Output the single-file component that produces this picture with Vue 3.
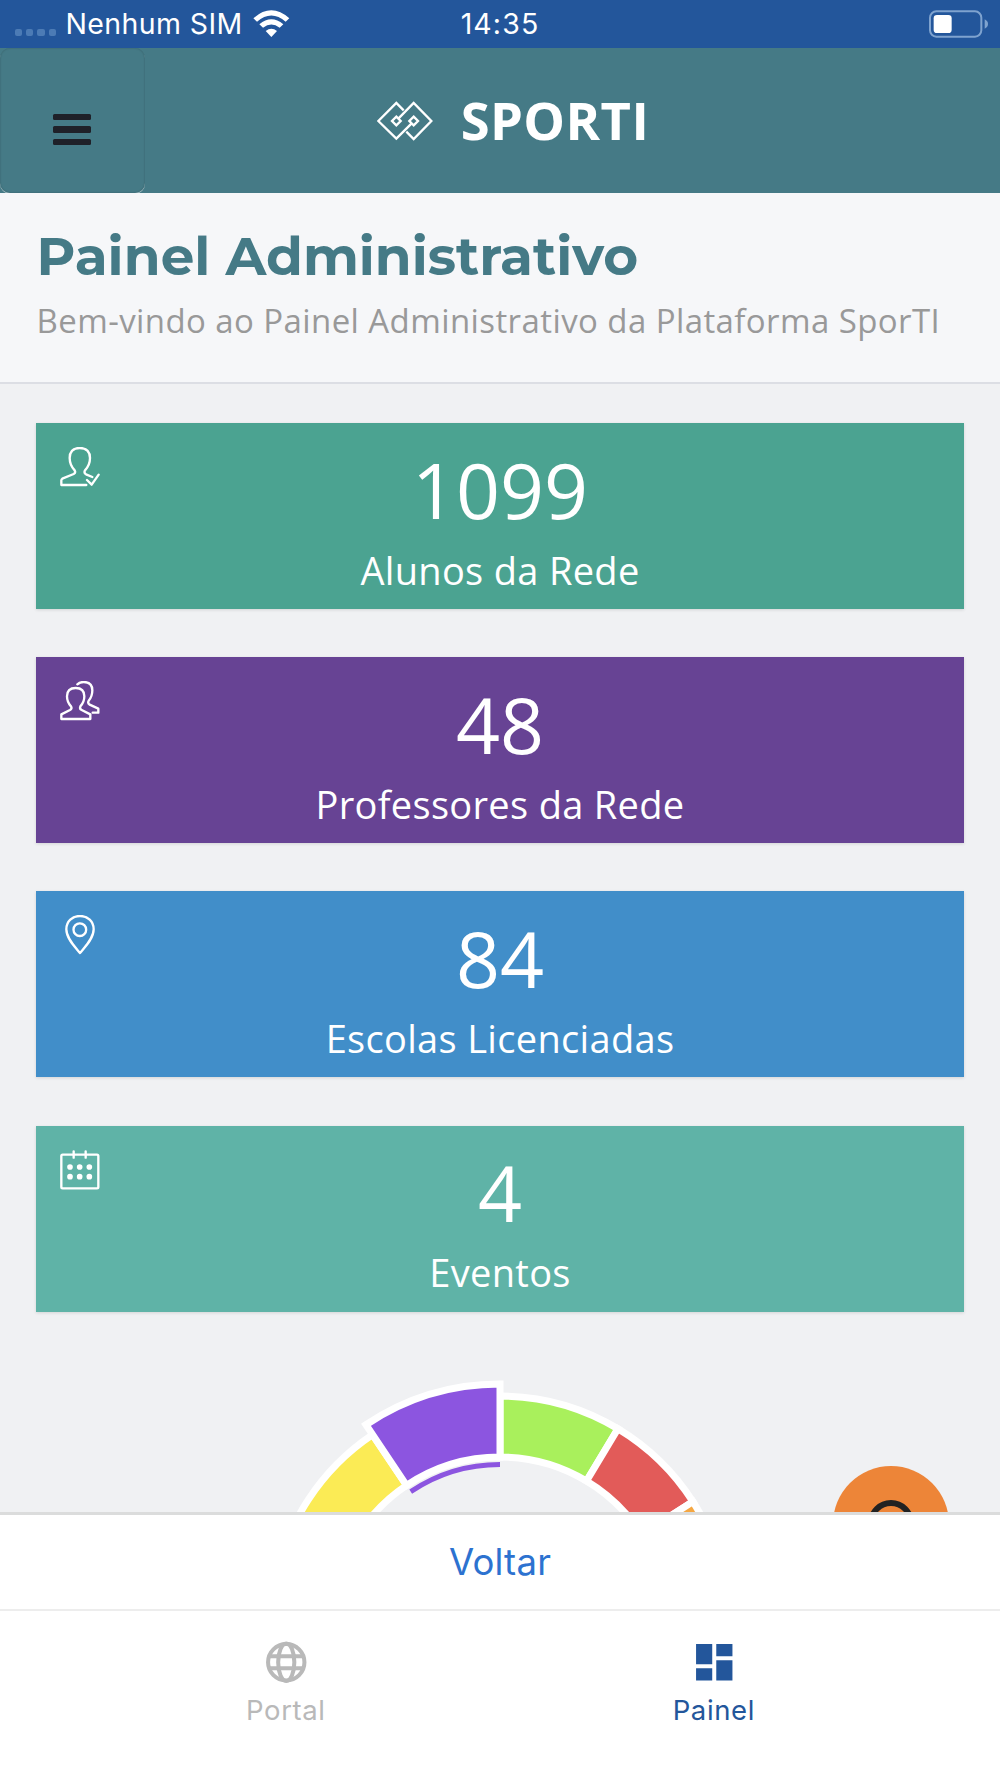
<script setup>
import { ref } from "vue"

const activeTab = ref("painel")

const cards = [
  { id: "alunos", total: 1099, label: "Alunos da Rede" },
  { id: "professores", total: 48, label: "Professores da Rede" },
  { id: "escolas", total: 84, label: "Escolas Licenciadas" },
  { id: "eventos", total: 4, label: "Eventos" }
]

// ponto no círculo (0 graus = topo)
const point = (r, deg) => {
  const rad = (deg * Math.PI) / 180
  return `${(250 + r * Math.sin(rad)).toFixed(2)} ${(260 - r * Math.cos(rad)).toFixed(2)}`
}

const slice = (from, to, outer) =>
  `M${point(168, from)}L${point(outer, from)}A${outer} ${outer} 0 0 1 ${point(outer, to)}L${point(168, to)}A168 168 0 0 0 ${point(168, from)}Z`

// a fatia selecionada fica por último para cobrir as outras
const slices = [
  { color: "#fbeb55", d: slice(-80, -33.8, 229) },
  { color: "#a9f05c", d: slice(0, 31, 229) },
  { color: "#e25b59", d: slice(31, 57.4, 229) },
  { color: "#f5a742", d: slice(57.4, 90, 229) },
  { color: "#8c55e0", d: slice(-33.8, 0, 241) }
]
const selectedArc = `M${point(160.5, -33.8)}A160.5 160.5 0 0 1 ${point(160.5, 0)}`
</script>

<template>
  <div class="screen">
    <div class="status">
      <div class="carrier">
        <div class="dots"><i></i><i></i><i></i><i></i></div>
        <span class="sim">Nenhum SIM</span>
        <svg class="wifi" viewBox="0 0 110 82">
          <path d="M1 25Q55-23 109 25L98 35Q55-2 12 35Z" />
          <path d="M19 43Q55 13 91 43L80 53Q55 34 30 53Z" />
          <path d="M38 63Q55 50 72 63L55 81Z" />
        </svg>
      </div>
      <span class="clock">14:35</span>
      <svg class="battery" viewBox="0 0 180 84">
        <rect x="3" y="4" width="154" height="76" rx="19" fill="none" stroke="#7fa3cf" stroke-width="6" />
        <rect x="14" y="15" width="54" height="54" rx="10" fill="#fff" />
        <path d="M167 28Q177 33 177 42T167 56Z" fill="#7fa3cf" />
      </svg>
    </div>

    <header class="topbar">
      <button class="menu"><i></i><i></i><i></i></button>
      <div class="brand">
        <svg class="logo" viewBox="50 303 168 120">
          <g fill="none" stroke="#fff" stroke-width="7">
            <path d="M130 331L108 309L54 363L108 416L154 370" />
            <path d="M138 395L160 417L213 363L160 309L114 356" />
            <path d="M108 350L121 363L108 376L95 363Z" />
            <path d="M160 350L173 363L160 376L147 363Z" />
          </g>
        </svg>
        <span class="name">SPORTI</span>
      </div>
    </header>

    <section class="heading">
      <h1>Painel Administrativo</h1>
      <p>Bem-vindo ao Painel Administrativo da Plataforma SporTI</p>
    </section>

    <main class="content">
      <div v-for="card in cards" :key="card.id" class="card" :class="card.id">
        <svg v-if="card.id === 'alunos'" class="icon" viewBox="90 95 120 120">
          <path d="M169 209H94V195Q94 192 97 190L131 176Q138 172 134 165Q119 149 119 128C119 107 130 98 149 98S180 107 180 128Q180 149 165 165Q161 173 168 177L187 185" />
          <path d="M171 194L185 208L206 178" />
        </svg>
        <svg v-else-if="card.id === 'professores'" class="icon" viewBox="90 93 120 120">
          <path d="M94 207V193L120 180Q127 176 123 169Q111 157 111 139C111 123 120 114 137 114S163 123 163 139Q163 157 151 169Q148 177 155 180L181 193V207Z" />
          <path d="M142 103Q150 96 161 96C178 96 187 105 187 121Q187 140 176 152Q172 160 179 164L205 176V188H188" />
        </svg>
        <svg v-else-if="card.id === 'escolas'" class="icon" viewBox="90 91 120 120">
          <path d="M150 205C136 188 109 162 109 134C109 110 127 94 150 94S191 110 191 134C191 162 164 188 150 205Z" />
          <circle cx="149.5" cy="135" r="19" />
        </svg>
        <svg v-else class="icon" viewBox="90 89 120 120">
          <rect x="94" y="103" width="111" height="101" rx="4" />
          <path d="M131 93V112M167 93V112" />
          <g class="days">
            <circle v-for="n in 6" :key="n" :cx="120 + ((n - 1) % 3) * 29" :cy="n > 3 ? 169 : 140" r="8.5" />
          </g>
        </svg>
        <div class="total">{{ card.total }}</div>
        <div class="label">{{ card.label }}</div>
      </div>

      <svg class="chart" viewBox="0 0 500 500">
        <path v-for="s in slices" :key="s.color" :d="s.d" :fill="s.color" stroke="#fff" stroke-width="7" />
        <path :d="selectedArc" fill="none" stroke="#8c55e0" stroke-width="5" />
      </svg>

      <button class="fab">
        <svg viewBox="0 0 116 116">
          <circle cx="58" cy="57" r="20" fill="none" stroke="#222" stroke-width="6" />
        </svg>
      </button>
    </main>

    <button class="back">Voltar</button>

    <nav class="tabs">
      <button class="tab" :class="{ active: activeTab === 'portal' }" @click="activeTab = 'portal'">
        <svg viewBox="0 0 24 24">
          <g fill="none" stroke="currentColor" stroke-width="2">
            <circle cx="12" cy="12" r="9" />
            <ellipse cx="12" cy="12" rx="4" ry="9.3" />
            <path d="M3.5 9H20.5M3.5 15H20.5" />
          </g>
        </svg>
        <span>Portal</span>
      </button>
      <button class="tab" :class="{ active: activeTab === 'painel' }" @click="activeTab = 'painel'">
        <svg viewBox="0 0 24 24">
          <path fill="currentColor" d="M3 13h8V3H3v10zm0 8h8v-6H3v6zm10 0h8V11h-8v10zm0-18v6h8V3h-8z" />
        </svg>
        <span>Painel</span>
      </button>
    </nav>
  </div>
</template>

<style>
body {
  margin: 0;
  background: #fff;
}
</style>

<style scoped>
.screen {
  display: flex;
  flex-direction: column;
  width: 1000px;
  height: 1778px;
  overflow: hidden;
  background: #fff;
  font-family: "Open Sans", "Noto Sans", sans-serif;
}

button {
  padding: 0;
  border: none;
  background: none;
  font: inherit;
}

svg {
  display: block;
}

/* barra de status */
.status {
  flex: none;
  display: grid;
  grid-template-columns: 1fr auto 1fr;
  align-items: center;
  height: 48px;
  background: #23569b;
  color: #fff;
  font-family: "Inter", sans-serif;
  font-size: 28.5px;
  line-height: 48px;
}

.carrier {
  display: flex;
  align-items: center;
}

.dots {
  display: flex;
  gap: 4px;
  margin: 17px 0 0 14.7px;
}

.dots i {
  width: 7.3px;
  height: 7.3px;
  border-radius: 2px;
  background: #4c7bb5;
}

.sim {
  margin-left: 9.5px;
  letter-spacing: 0.4px;
}

.clock {
  letter-spacing: 1.1px;
}

.wifi {
  width: 36.7px;
  height: 27.3px;
  margin-left: 10.5px;
  fill: #fff;
}

.battery {
  justify-self: end;
  width: 60px;
  height: 28px;
  margin-right: 11px;
}

/* topo */
.topbar {
  flex: none;
  display: grid;
  grid-template-columns: 145px 1fr 145px;
  height: 145px;
  background: #457a86;
}

.menu {
  display: flex;
  flex-direction: column;
  align-items: center;
  gap: 6px;
  height: 145px;
  padding: 65.5px 2px 0 0;
  box-sizing: border-box;
  border-radius: 10px;
  box-shadow: inset 0 0 2px rgba(0, 0, 0, 0.25), 0 1px 0 rgba(255, 255, 255, 0.5);
}

.menu i {
  width: 38px;
  height: 6.5px;
  border-radius: 1.5px;
  background: #1f2129;
}

.brand {
  display: flex;
  align-items: center;
  padding-left: 231.7px;
}

.logo {
  width: 56px;
  height: 40px;
}

.name {
  margin-left: 28px;
  color: #fff;
  font-size: 52.5px;
  font-weight: 700;
  letter-spacing: 0.4px;
  line-height: 143px;
  height: 145px;
}

.heading {
  flex: none;
  box-sizing: border-box;
  height: 191px;
  padding: 32px 36.5px 0;
  border-bottom: 2px solid #dcdee4;
  background: #f6f7f9;
}

h1 {
  margin: 0;
  color: #457a86;
  font-family: "Montserrat", "Inter", sans-serif;
  font-size: 53.3px;
  font-weight: 700;
  line-height: 62px;
  white-space: nowrap;
}

.heading p {
  margin: 10px 0 0;
  color: #999;
  font-size: 33px;
  letter-spacing: 0.41px;
  line-height: 48px;
  white-space: nowrap;
}

/* conteúdo */
.content {
  position: relative;
  flex: none;
  box-sizing: border-box;
  height: 1128px;
  padding: 38.7px 36.3px 0;
  overflow: hidden;
  background: #f0f1f3;
}

.card {
  position: relative;
  box-sizing: border-box;
  height: 186px;
  margin-bottom: 48.3px;
  padding-top: 22.7px;
  color: #fff;
  text-align: center;
  box-shadow: 0 1px 3px rgba(0, 0, 0, 0.12);
}

.alunos {
  background: #4ba391;
}

.professores {
  background: #674394;
}

.escolas {
  background: #418ec9;
}

.eventos {
  background: #5fb3a7;
}

.icon {
  position: absolute;
  top: 24px;
  left: 23.7px;
  width: 40px;
  height: 40px;
  fill: none;
  stroke: #fff;
  stroke-width: 7;
  stroke-linecap: round;
  stroke-linejoin: round;
}

.days {
  fill: #fff;
  stroke: none;
}

.total {
  font-size: 77px;
  line-height: 90px;
}

.label {
  margin-top: 8.2px;
  font-size: 38px;
  letter-spacing: 0.32px;
  line-height: 52px;
}

.chart {
  width: 500px;
  height: 500px;
  margin: 53.3px auto 0;
}

.fab {
  position: absolute;
  top: 1082px;
  right: 51px;
  width: 116px;
  height: 116px;
  border-radius: 50%;
  background: #ed8538;
}

/* rodapé */
.back {
  flex: none;
  box-sizing: border-box;
  height: 99px;
  padding-bottom: 1px;
  border-top: 3px solid #dbdcdc;
  border-bottom: 2px solid #ededed;
  color: #2c72d0;
  font-family: "Inter", sans-serif;
  font-size: 36.5px;
  letter-spacing: 0.2px;
}

.tabs {
  flex: 1;
  display: flex;
  padding: 27px 72.2px 0 71.8px;
}

.tab {
  flex: 1;
  display: flex;
  flex-direction: column;
  align-items: center;
  color: #b9b9b9;
  font-family: "Inter", sans-serif;
  font-size: 27.5px;
  letter-spacing: 0.6px;
  line-height: 36px;
}

.tab svg {
  width: 48.5px;
  height: 48.5px;
  margin-bottom: 5.5px;
}

.active {
  color: #23569b;
}
</style>
